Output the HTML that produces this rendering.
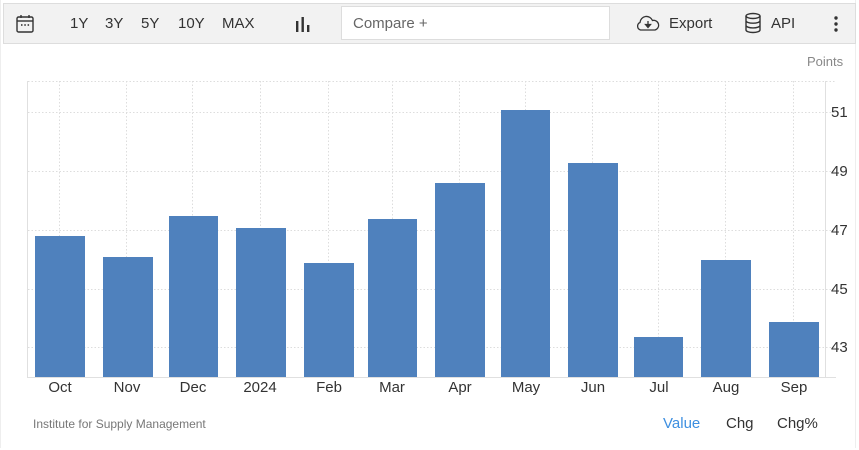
<!DOCTYPE html><html><head><style>
body{margin:0;width:859px;height:450px;background:#fff;font-family:"Liberation Sans",Arial,sans-serif;overflow:hidden;position:relative}
.tb{position:absolute;left:3px;top:3px;width:851px;height:39px;background:#f2f2f2;border:1px solid #ddd}
.t{position:absolute;font-size:15px;color:#333;top:15px}
.box{position:absolute;left:0;top:0;width:854px;height:448px;border-left:1px solid #eee;border-right:1px solid #eee}
</style></head><body>
<div class="box"></div>
<div class="tb"></div>
<svg style="position:absolute;left:14px;top:13px" width="22" height="22" viewBox="0 0 22 22" fill="none" stroke="#333" stroke-width="1.4"><rect x="3" y="4" width="16" height="15" rx="1.5"/><line x1="3" y1="8" x2="19" y2="8"/><line x1="7" y1="2" x2="7" y2="5"/><line x1="15" y1="2" x2="15" y2="5"/><g stroke-width="1.6"><line x1="7" y1="12" x2="8.5" y2="12"/><line x1="10.3" y1="12" x2="11.8" y2="12"/><line x1="13.6" y1="12" x2="15.1" y2="12"/></g></svg>
<div class="t" style="left:70px">1Y</div><div class="t" style="left:105px">3Y</div><div class="t" style="left:141px">5Y</div><div class="t" style="left:178px">10Y</div><div class="t" style="left:222px">MAX</div>
<svg style="position:absolute;left:294px;top:15px" width="18" height="18"><rect x="2" y="6" width="2.4" height="11" fill="#333"/><rect x="7.5" y="2" width="2.4" height="15" fill="#333"/><rect x="13" y="10" width="2.4" height="7" fill="#333"/></svg>
<div style="position:absolute;left:341px;top:6px;width:267px;height:32px;background:#fff;border:1px solid #ddd"></div>
<div class="t" style="left:353px;color:#666">Compare +</div>
<svg style="position:absolute;left:635px;top:13px" width="26" height="20" viewBox="0 0 26 20" fill="none" stroke="#333" stroke-width="1.3"><path d="M7 17H5.5A4 4 0 0 1 5 9.5 6.5 6.5 0 0 1 17.5 7.5 4.8 4.8 0 0 1 20 17H7Z"/><line x1="13" y1="8" x2="13" y2="14"/><path d="M10.5 11.5 13 14.5 15.5 11.5Z" fill="#333"/></svg>
<div class="t" style="left:669px">Export</div>
<svg style="position:absolute;left:743px;top:12px" width="20" height="22" viewBox="0 0 20 22" fill="none" stroke="#333" stroke-width="1.4"><ellipse cx="10" cy="4" rx="7" ry="2.5"/><path d="M3 4v14c0 1.4 3.1 2.5 7 2.5s7-1.1 7-2.5V4M3 8.7c0 1.4 3.1 2.5 7 2.5s7-1.1 7-2.5M3 13.4c0 1.4 3.1 2.5 7 2.5s7-1.1 7-2.5"/></svg>
<div class="t" style="left:771px">API</div>
<svg style="position:absolute;left:832px;top:15px" width="8" height="18"><circle cx="4" cy="3" r="1.7" fill="#333"/><circle cx="4" cy="9" r="1.7" fill="#333"/><circle cx="4" cy="15" r="1.7" fill="#333"/></svg>
<div style="position:absolute;left:807px;top:54px;font-size:13px;color:#888">Points</div>
<svg style="position:absolute;left:0;top:0" width="859" height="450">
<g stroke="#ddd" stroke-width="1" stroke-dasharray="1.5,2">
<line x1="28" y1="81.5" x2="836" y2="81.5"/><line x1="28" y1="112.5" x2="836" y2="112.5"/><line x1="28" y1="171.5" x2="836" y2="171.5"/><line x1="28" y1="230.5" x2="836" y2="230.5"/><line x1="28" y1="289.5" x2="836" y2="289.5"/><line x1="28" y1="347.5" x2="836" y2="347.5"/>
<line x1="59.5" y1="81" x2="59.5" y2="377"/><line x1="126.5" y1="81" x2="126.5" y2="377"/><line x1="192.5" y1="81" x2="192.5" y2="377"/><line x1="260.5" y1="81" x2="260.5" y2="377"/><line x1="328.5" y1="81" x2="328.5" y2="377"/><line x1="392.5" y1="81" x2="392.5" y2="377"/><line x1="459.5" y1="81" x2="459.5" y2="377"/><line x1="525.5" y1="81" x2="525.5" y2="377"/><line x1="592.5" y1="81" x2="592.5" y2="377"/><line x1="658.5" y1="81" x2="658.5" y2="377"/><line x1="725.5" y1="81" x2="725.5" y2="377"/><line x1="793.5" y1="81" x2="793.5" y2="377"/>
</g>
<line x1="27.5" y1="81" x2="27.5" y2="377" stroke="#e0e0e0"/>
<line x1="825.5" y1="81" x2="825.5" y2="377" stroke="#e0e0e0"/>
<line x1="27" y1="377.5" x2="836" y2="377.5" stroke="#e0e0e0"/>
<g fill="#4f81bd">
<rect x="35" y="236" width="50" height="141"/><rect x="103" y="257" width="50" height="120"/><rect x="169" y="216" width="49" height="161"/><rect x="236" y="228" width="50" height="149"/><rect x="304" y="263" width="50" height="114"/><rect x="368" y="219" width="49" height="158"/><rect x="435" y="183" width="50" height="194"/><rect x="501" y="110" width="49" height="267"/><rect x="568" y="163" width="50" height="214"/><rect x="634" y="337" width="49" height="40"/><rect x="701" y="260" width="50" height="117"/><rect x="769" y="322" width="50" height="55"/>
</g>
<g font-family="Liberation Sans,Arial,sans-serif" font-size="15" fill="#333">
<text x="831" y="117">51</text><text x="831" y="176">49</text><text x="831" y="235">47</text><text x="831" y="294">45</text><text x="831" y="352">43</text>
<g text-anchor="middle"><text x="60" y="392">Oct</text><text x="127" y="392">Nov</text><text x="193" y="392">Dec</text><text x="260" y="392">2024</text><text x="329" y="392">Feb</text><text x="392" y="392">Mar</text><text x="460" y="392">Apr</text><text x="526" y="392">May</text><text x="593" y="392">Jun</text><text x="659" y="392">Jul</text><text x="726" y="392">Aug</text><text x="794" y="392">Sep</text></g>
<text x="663" y="428" fill="#3d8fe0">Value</text><text x="726" y="428">Chg</text><text x="777" y="428">Chg%</text>
</g>
<text x="33" y="428" font-family="Liberation Sans,Arial,sans-serif" font-size="12" fill="#777">Institute for Supply Management</text>
</svg>
</body></html>
